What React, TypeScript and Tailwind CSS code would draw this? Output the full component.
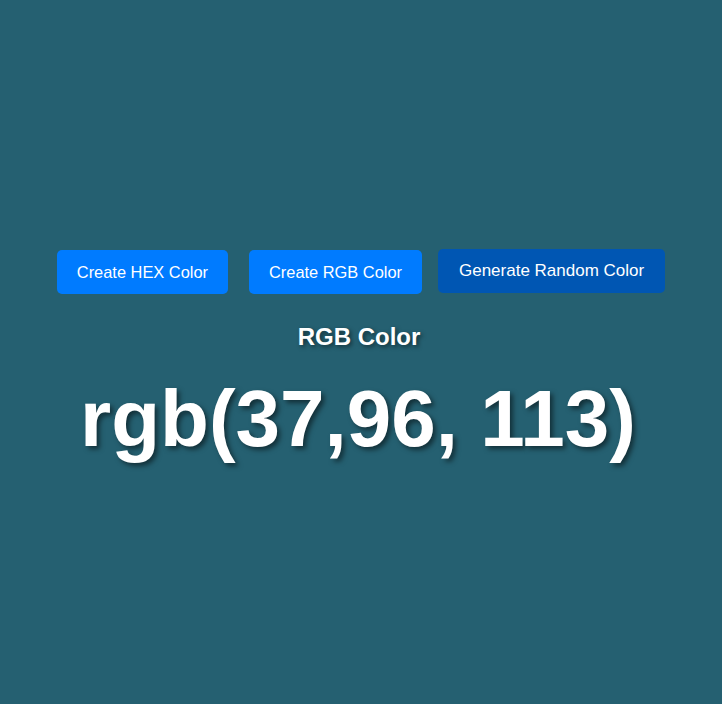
import { useState } from "react"

type Mode = "hex" | "rgb"

const btn = "h-[44px] rounded-[5px] text-white border-0 cursor-pointer"

export default function App() {
  const [mode, setMode] = useState<Mode>("rgb")
  const [rgb] = useState<[number, number, number]>([37, 96, 113])

  const value = `rgb(${rgb[0]},${rgb[1]}, ${rgb[2]})`

  return (
    <div
      className="min-h-screen pt-[5px] flex flex-col items-center justify-center bg-[#256071] text-white"
      style={{ fontFamily: '"Liberation Sans", Arial, sans-serif' }}
    >
      <div className="flex items-start">
        <button className={`${btn} px-5 text-[16.4px] bg-[#007bff]`} onClick={() => setMode("hex")}>
          Create HEX Color
        </button>
        <button className={`${btn} ml-[21px] px-5 text-[16.4px] bg-[#007bff]`} onClick={() => setMode("rgb")}>
          Create RGB Color
        </button>
        <button className={`${btn} ml-4 px-[21px] text-[17px] -translate-y-px bg-[#0056b3]`}>
          Generate Random Color
        </button>
      </div>

      <h2 className="mt-[29px] mr-[4px] text-[24px] leading-[28px] font-bold [text-shadow:2px_2px_4px_rgba(0,0,0,0.5)]">
        {mode === "rgb" ? "RGB Color" : "HEX Color"}
      </h2>
      <h1 className="mt-[28px] mr-[6px] text-[80px] leading-[80px] font-bold [text-shadow:3px_3px_5px_rgba(0,0,0,0.5)]">
        {value}
      </h1>
    </div>
  )
}
